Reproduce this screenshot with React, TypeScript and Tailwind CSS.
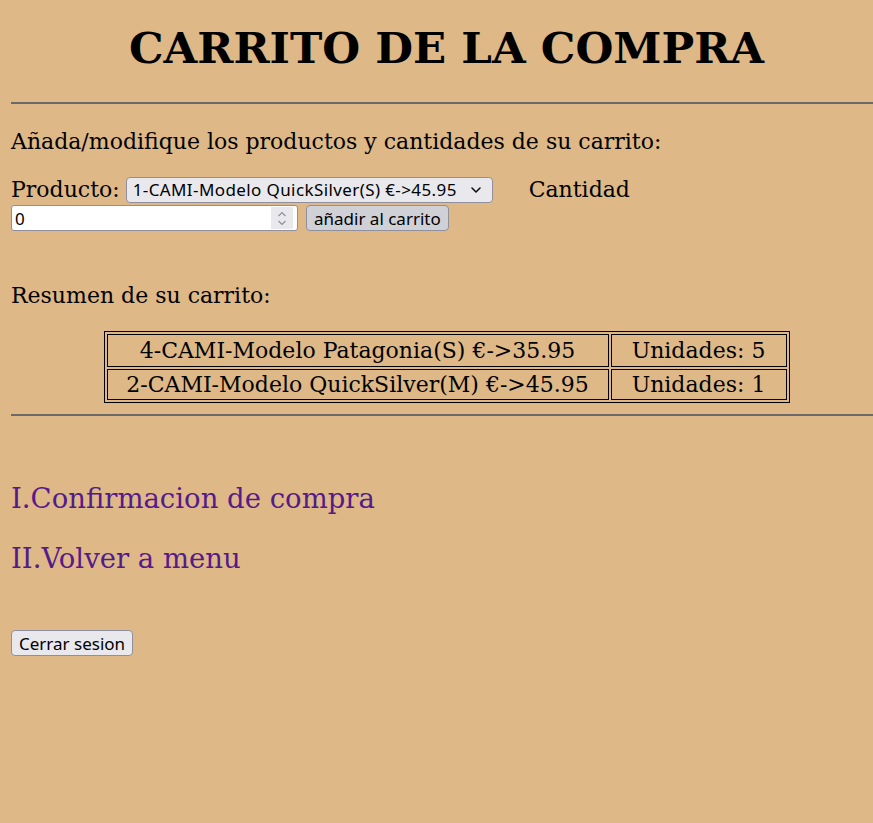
import { useState } from "react"

const serif = "font-['DejaVu_Serif',serif]"
const ui = "font-['Noto_Sans',sans-serif]"

const items = [
    { name: "4-CAMI-Modelo Patagonia(S) €->35.95", units: 5 },
    { name: "2-CAMI-Modelo QuickSilver(M) €->45.95", units: 1 },
]

function Chevron() {
    return (
        <svg width="12" height="8" viewBox="0 0 12 8" className="shrink-0">
            <path d="M2 2l4 4 4-4" fill="none" stroke="#111" strokeWidth="1.6" strokeLinecap="round" strokeLinejoin="round" />
        </svg>
    )
}

function Spinner() {
    return (
        <div className="flex h-full w-[22px] flex-col items-center justify-center gap-[3px] bg-[#e9e9ed]">
            <svg width="10" height="6" viewBox="0 0 10 6">
                <path d="M1.5 5l3.5-3.5L8.5 5" fill="none" stroke="#8f8f9d" strokeWidth="1.2" />
            </svg>
            <svg width="10" height="6" viewBox="0 0 10 6">
                <path d="M1.5 1l3.5 3.5L8.5 1" fill="none" stroke="#8f8f9d" strokeWidth="1.2" />
            </svg>
        </div>
    )
}

export default function App() {
    const [qty, setQty] = useState("0")

    return (
        <div className={`min-h-screen overflow-hidden bg-[#deb887] text-black ${serif}`}>
            <div className="ml-[11px] w-[871px]">
                <h1 className="pt-[23px] text-center text-[43.5px] font-bold leading-[50px]">CARRITO DE LA COMPRA</h1>

                <hr className="mt-[29px] border-0 border-t-2 border-[#6a6a6a]" />

                <p className="mt-[25px] text-[22px] leading-[26px]">Añada/modifique los productos y cantidades de su carrito:</p>

                {/* formulario de producto */}
                <div className="mt-[22px] flex items-center text-[22px] leading-[26px]">
                    <span>Producto:</span>
                    <div className={`ml-[6px] flex h-[26px] w-[367px] items-center justify-between rounded-[4px] border border-[#8f8f9d] bg-[#e9e9ed] pl-[6px] pr-[10px] text-[17px] tracking-[0.4px] ${ui}`}>
                        <span>1-CAMI-Modelo QuickSilver(S) €-&gt;45.95</span>
                        <Chevron />
                    </div>
                    <span className="ml-[36px]">Cantidad</span>
                </div>
                <div className={`mt-[2px] flex items-center gap-[8px] text-[17px] ${ui}`}>
                    <div className="flex h-[26px] w-[287px] items-center overflow-hidden rounded-[3px] border border-[#8f8f9d] bg-white">
                        <input
                            value={qty}
                            onChange={e => setQty(e.target.value)}
                            className="h-full min-w-0 flex-1 bg-transparent px-[3px] outline-none"
                        />
                        <div className="mr-[4px] h-[22px]"><Spinner /></div>
                    </div>
                    <button className="h-[26px] rounded-[4px] border border-[#8f8f9d] bg-[#d0d0d7] px-[7px] leading-none">añadir al carrito</button>
                </div>

                <p className="mt-[52px] text-[22px] leading-[26px]">Resumen de su carrito:</p>

                {/* resumen */}
                <div className="mt-[22px] flex justify-center">
                    <table className="border-separate border-spacing-[2px] border border-black text-[22px] leading-[26px]">
                        <tbody>
                            {items.map((it, i) => (
                                <tr key={it.name}>
                                    <td className={`${i === 0 ? "h-[33px]" : "h-[31px]"} w-[502px] border border-black text-center`}>{it.name}</td>
                                    <td className="w-[176px] border border-black text-center">Unidades: {it.units}</td>
                                </tr>
                            ))}
                        </tbody>
                    </table>
                </div>

                <hr className="mt-[11px] border-0 border-t-2 border-[#6a6a6a]" />

                <div className="mt-[66px] flex flex-col gap-[27px] text-[27.5px] leading-[33px] text-[#551a8b]">
                    <a href="#">I.Confirmacion de compra</a>
                    <a href="#">II.Volver a menu</a>
                </div>

                <button className={`mt-[55px] h-[26px] rounded-[4px] border border-[#8f8f9d] bg-[#e9e9ed] px-[7px] text-[17px] leading-none ${ui}`}>Cerrar sesion</button>
            </div>
        </div>
    )
}
